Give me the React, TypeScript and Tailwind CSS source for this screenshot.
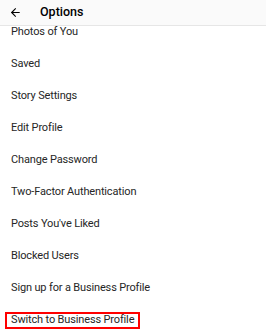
import { ArrowLeft } from 'lucide-react';

const ITEMS = [
  'Photos of You',
  'Saved',
  'Story Settings',
  'Edit Profile',
  'Change Password',
  'Two-Factor Authentication',
  "Posts You've Liked",
  'Blocked Users',
  'Sign up for a Business Profile',
];

export default function App() {
  return (
    <main className="w-[266px] h-[336px] overflow-hidden bg-white font-['Roboto',sans-serif] text-[#262626]">
      <header className="relative z-10 h-[26px] flex items-center bg-[#fafafa] border-b border-[#e6e6e6]">
        <ArrowLeft className="ml-[9px] w-[13px] h-[13px] text-black" strokeWidth={2} />
        <h1 className="ml-[18px] text-[12.5px] font-medium text-black">Options</h1>
      </header>

      <ul className="-mt-[10px]">
        {ITEMS.map((item) => (
          <li key={item} className="h-8 flex items-center pl-[11px] text-[11px] tracking-[-0.15px]">
            {item}
          </li>
        ))}
        <li className="h-8 flex items-center pl-[5px] text-[11px] tracking-[-0.15px]">
          <span className="h-[17px] flex items-center px-1 border-2 border-[#ff0000]">
            Switch to Business Profile
          </span>
        </li>
      </ul>
    </main>
  );
}
